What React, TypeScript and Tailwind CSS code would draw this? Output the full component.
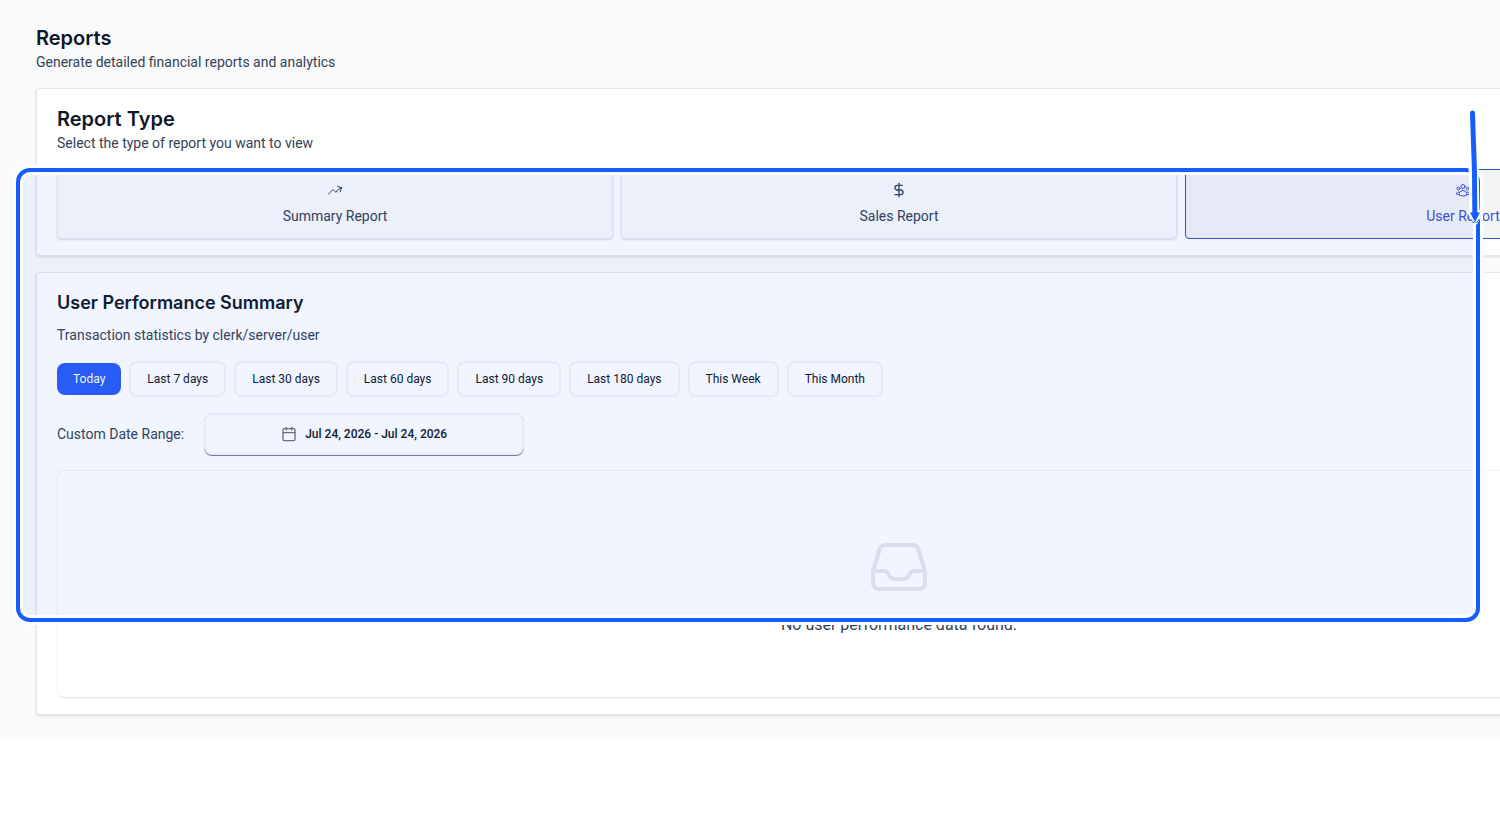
import { useState } from 'react';
import { Calendar, DollarSign } from 'lucide-react';
import { HiOutlineArrowTrendingUp, HiOutlineInbox, HiOutlineUserGroup } from 'react-icons/hi2';
import clsx from 'clsx';

const reportTypes = [
  { id: 'summary', label: 'Summary Report', icon: <HiOutlineArrowTrendingUp className="size-4" /> },
  { id: 'sales', label: 'Sales Report', icon: <DollarSign className="size-4" strokeWidth={2} /> },
  { id: 'user', label: 'User Report', icon: <HiOutlineUserGroup className="size-4" /> },
];

const ranges = [
  'Today',
  'Last 7 days',
  'Last 30 days',
  'Last 60 days',
  'Last 90 days',
  'Last 180 days',
  'This Week',
  'This Month',
];

function Highlight() {
  return (
    <>
      <div className="pointer-events-none absolute left-4 right-5 top-[168px] h-[454px] rounded-[14px] border-4 border-[#155dfc] bg-[#155dfc]/6 shadow-[0_0_0_3px_#ffffff,inset_0_0_0_3px_#ffffff]" />
      <svg
        className="pointer-events-none absolute right-0 top-[100px] h-[140px] w-[60px]"
        viewBox="0 0 60 140"
        fill="none"
        strokeLinecap="round"
        strokeLinejoin="round"
      >
        <path d="M32.5 13 34.5 113" stroke="#fff" strokeWidth="10" />
        <path d="M31 113h8.5L35 122z" fill="#fff" stroke="#fff" strokeWidth="6" />
        <path d="M32.5 14 34.5 72 34.8 113" stroke="#155dfc" strokeWidth="5" strokeLinecap="butt" />
        <circle cx="32.5" cy="13" r="2.5" fill="#155dfc" />
        <path d="M30 112.5h10L35 122z" fill="#155dfc" />
        <path d="M31 119.5 33.5 123 35 121.5 36.5 123 39 119.5" stroke="#155dfc" strokeWidth="1" />
      </svg>
    </>
  );
}

export default function App() {
  const [report, setReport] = useState('user');
  const [range, setRange] = useState('Today');

  return (
    <div className="relative min-h-screen overflow-hidden bg-white font-['Roboto','Inter',sans-serif] text-sm text-[#364153]">
      <main className="w-[calc(100%+298px)] bg-[#f9fafb] px-9 py-6">
        <header>
          <h1 className="font-['Inter',sans-serif] text-xl font-semibold leading-7 text-[#101828]">Reports</h1>
          <p>Generate detailed financial reports and analytics</p>
        </header>

        {/* Report type */}
        <section className="mt-4 rounded border border-gray-200 bg-white px-5 py-4 shadow-sm">
          <h2 className="font-['Inter',sans-serif] text-xl font-semibold leading-7 text-[#101828]">Report Type</h2>
          <p>Select the type of report you want to view</p>
          <div className="mt-4 grid grid-cols-3 gap-2">
            {reportTypes.map((type) => (
              <button
                key={type.id}
                type="button"
                onClick={() => setReport(type.id)}
                className={clsx(
                  'flex flex-col items-center gap-2 rounded border px-4 py-3',
                  report === type.id
                    ? 'border-[#3451c6] bg-[#f3f4f6] text-[#3f51d1]'
                    : 'border-gray-200 bg-[#f9fafb] shadow-sm'
                )}
              >
                {type.icon}
                <span>{type.label}</span>
              </button>
            ))}
          </div>
        </section>

        {/* User performance */}
        <section className="mt-4 rounded border border-gray-200 bg-white px-5 py-4 shadow-sm">
          <h2 className="font-['Inter',sans-serif] text-lg font-semibold leading-7 text-[#101828]">
            User Performance Summary
          </h2>
          <p className="mt-2">Transaction statistics by clerk/server/user</p>

          <div className="mt-4 flex items-center gap-2">
            {ranges.map((item) => (
              <button
                key={item}
                type="button"
                onClick={() => setRange(item)}
                className={clsx(
                  'rounded-lg px-4 text-xs',
                  range === item
                    ? 'h-8 bg-[#2b5cf5] text-white'
                    : 'h-9 border-2 border-[#f3f4f6] text-[#101828]'
                )}
              >
                {item}
              </button>
            ))}
          </div>

          <div className="mt-4 flex items-center gap-5">
            <label htmlFor="date-range">Custom Date Range:</label>
            <button
              id="date-range"
              type="button"
              className="flex h-[42px] w-80 items-center justify-center gap-2 rounded-lg border-2 border-[#f3f4f6] bg-white text-xs font-medium text-[#101828] shadow-[0_1px_0_#7c8095]"
            >
              <Calendar className="size-4 text-[#6a7282]" strokeWidth={2} />
              Jul 24, 2026 - Jul 24, 2026
            </button>
          </div>

          <div className="mt-[15px] flex flex-col items-center gap-3.5 rounded-lg border border-gray-100 border-b-gray-200 pb-15 pt-16 shadow-xs">
            <HiOutlineInbox className="size-16 text-gray-200" />
            <p className="text-base">No user performance data found.</p>
          </div>
        </section>
      </main>
      <Highlight />
    </div>
  );
}
